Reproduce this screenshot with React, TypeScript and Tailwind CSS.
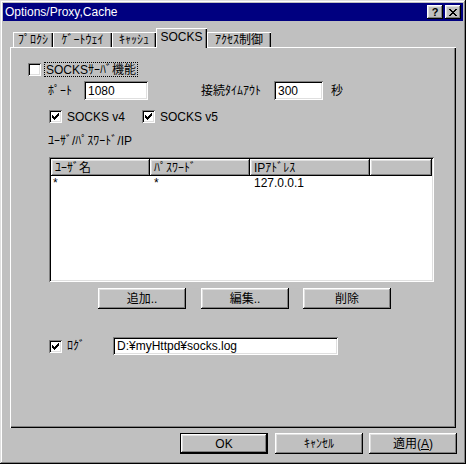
import React from "react";

const raised =
  "shadow-[inset_-1px_-1px_0_#000,inset_1px_1px_0_#fff,inset_-2px_-2px_0_#808080,inset_2px_2px_0_#dfdfdf]";
const sunken =
  "shadow-[inset_1px_1px_0_#808080,inset_-1px_-1px_0_#fff,inset_2px_2px_0_#000,inset_-2px_-2px_0_#dfdfdf]";

function Check() {
  return (
    <svg width="7" height="7" viewBox="0 0 7 7" shapeRendering="crispEdges">
      <path d="M0 2H1V3H2V4H3V3H4V2H5V1H6V0H7V3H6V4H5V5H4V6H3V7H2V6H1V5H0Z" fill="#000" />
    </svg>
  );
}

function Checkbox({ checked }: { checked?: boolean }) {
  return (
    <div className={`w-[13px] h-[13px] bg-white flex items-center justify-center shrink-0 ${sunken}`}>
      {checked && <Check />}
    </div>
  );
}

function Field({ value, className }: { value: string; className: string }) {
  return (
    <div className={`bg-white flex items-center pl-[4px] ${sunken} ${className}`}>
      <span className="leading-none">{value}</span>
    </div>
  );
}

function Button({ children, className = "" }: { children: React.ReactNode; className?: string }) {
  return (
    <div className={`bg-[#c0c0c0] flex items-center justify-center ${raised} ${className}`}>
      {children}
    </div>
  );
}

function Tab({ label, width, active }: { label: string; width: string; active?: boolean }) {
  if (active) {
    return (
      <div
        className={`${width} h-[20px] -mb-px relative z-10 bg-[#c0c0c0] flex items-center justify-center pb-[3px] shadow-[inset_1px_1px_0_#fff,inset_-1px_0_0_#000,inset_-2px_0_0_#808080]`}
      >
        {label}
      </div>
    );
  }
  return (
    <div
      className={`${width} h-[15px] flex items-center justify-center shadow-[inset_1px_1px_0_#fff,inset_-1px_0_0_#000,inset_-2px_0_0_#808080]`}
    >
      {label}
    </div>
  );
}

export default function App() {
  return (
    <div
      className={`w-[466px] h-[464px] bg-[#c0c0c0] p-[3px] text-[12px] text-black font-['Liberation_Sans','Noto_Sans_CJK_JP',sans-serif] shadow-[inset_-1px_-1px_0_#000,inset_1px_1px_0_#dfdfdf,inset_-2px_-2px_0_#808080,inset_2px_2px_0_#fff]`}
    >
      {/* title bar */}
      <div className="h-[18px] bg-[#000080] flex items-center justify-between pl-[2px] pr-[2px]">
        <span className="text-white">Options/Proxy,Cache</span>
        <div className="flex gap-[2px]">
          <Button className="w-[16px] h-[14px] font-bold text-[11px] leading-none">?</Button>
          <Button className="w-[16px] h-[14px]">
            <svg width="8" height="7" viewBox="0 0 8 7" shapeRendering="crispEdges">
              <path
                d="M0 0H2V1H3V2H5V1H6V0H8V1H7V2H6V3H5V4H6V5H7V6H8V7H6V6H5V5H3V6H2V7H0V6H1V5H2V4H3V3H2V2H1V1H0Z"
                fill="#000"
              />
            </svg>
          </Button>
        </div>
      </div>

      {/* tabs + panel */}
      <div className="mt-[7px] ml-[7px] w-[446px]">
        <div className="flex items-end h-[19px] pl-[3px]">
          <Tab label="ﾌﾟﾛｸｼ" width="w-[40px]" />
          <Tab label="ｹﾞｰﾄｳｪｲ" width="w-[59px]" />
          <Tab label="ｷｬｯｼｭ" width="w-[44px]" />
          <Tab label="SOCKS" width="w-[51px]" active />
          <Tab label="ｱｸｾｽ制御" width="w-[64px]" />
        </div>
        <div className="h-[381px] shadow-[inset_1px_1px_0_#fff,inset_-1px_-1px_0_#000,inset_-2px_-2px_0_#808080] pt-[15px]">
          {/* server function */}
          <div className="flex items-center h-[15px] ml-[18px]">
            <Checkbox />
            <span className="ml-[3px] px-[1px] h-[15px] flex items-center border border-dotted border-black">
              SOCKSｻｰﾊﾞ機能
            </span>
          </div>

          {/* port / timeout */}
          <div className="flex items-center h-[19px] mt-[4px] ml-[38px]">
            <span className="w-[36px]">ﾎﾟｰﾄ</span>
            <Field value="1080" className="w-[64px] h-[19px]" />
            <span className="ml-[53px] w-[73px]">接続ﾀｲﾑｱｳﾄ</span>
            <Field value="300" className="w-[49px] h-[19px]" />
            <span className="ml-[8px]">秒</span>
          </div>

          {/* versions */}
          <div className="flex items-center h-[13px] mt-[10px] ml-[39px]">
            <div className="flex items-center w-[93px]">
              <Checkbox checked />
              <span className="ml-[5px]">SOCKS v4</span>
            </div>
            <Checkbox checked />
            <span className="ml-[5px]">SOCKS v5</span>
          </div>

          <div className="mt-[11px] ml-[38px] h-[14px] leading-[14px]">ﾕｰｻﾞ/ﾊﾟｽﾜｰﾄﾞ/IP</div>

          {/* list view */}
          <div className={`mt-[9px] ml-[39px] w-[385px] h-[125px] bg-white p-[2px] ${sunken}`}>
            <div className="flex h-[17px]">
              <Button className="w-[99px] !justify-start pl-[4px]">ﾕｰｻﾞ名</Button>
              <Button className="w-[100px] !justify-start pl-[4px]">ﾊﾟｽﾜｰﾄﾞ</Button>
              <Button className="w-[120px] !justify-start pl-[4px]">IPｱﾄﾞﾚｽ</Button>
              <Button className="flex-1" />
            </div>
            <div className="flex h-[14px] items-center">
              <span className="w-[99px] pl-[2px]">*</span>
              <span className="w-[100px] pl-[4px]">*</span>
              <span className="pl-[4px]">127.0.0.1</span>
            </div>
          </div>

          {/* list buttons */}
          <div className="flex mt-[6px] ml-[88px] h-[21px]">
            <Button className="w-[88px]">追加..</Button>
            <Button className="w-[88px] ml-[15px]">編集..</Button>
            <Button className="w-[88px] ml-[14px]">削除</Button>
          </div>

          {/* log */}
          <div className="flex items-center mt-[28px] ml-[39px] h-[18px]">
            <Checkbox checked />
            <span className="ml-[5px] w-[46px]">ﾛｸﾞ</span>
            <Field value="D:¥myHttpd¥socks.log" className="w-[225px] h-[18px]" />
          </div>
        </div>
      </div>

      {/* dialog buttons */}
      <div className="flex mt-[5px] ml-[177px] h-[21px]">
        <div className="w-[88px] h-[21px] border border-black">
          <Button className="w-full h-full">OK</Button>
        </div>
        <Button className="w-[88px] ml-[7px]">ｷｬﾝｾﾙ</Button>
        <Button className="w-[88px] ml-[6px]">
          適用(<span className="underline">A</span>)
        </Button>
      </div>
    </div>
  );
}
